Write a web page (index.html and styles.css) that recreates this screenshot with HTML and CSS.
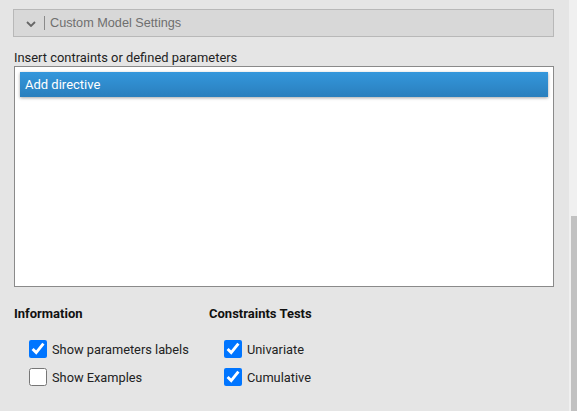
FILE: index.html
```html
<!DOCTYPE html>
<html>
<head>
<meta charset="utf-8">
<link rel="stylesheet" href="styles.css">
</head>
<body>
<div class="page">
  <div class="main">
    <div class="section-header">
      <svg class="chevron" width="10" height="6" viewBox="0 0 10 6"><path d="M1 1 L5 5 L9 1" fill="none" stroke="#666" stroke-width="1.8"/></svg>
      <span class="sep"></span>
      <span class="section-title">Custom Model Settings</span>
    </div>
    <div class="field-label">Insert contraints or defined parameters</div>
    <div class="list-box">
      <div class="list-item">Add directive</div>
    </div>
    <div class="options">
      <div class="col col-info">
        <div class="col-title">Information</div>
        <label class="check-row"><input type="checkbox" checked><span>Show parameters labels</span></label>
        <label class="check-row"><input type="checkbox"><span>Show Examples</span></label>
      </div>
      <div class="col">
        <div class="col-title">Constraints Tests</div>
        <label class="check-row"><input type="checkbox" checked><span>Univariate</span></label>
        <label class="check-row"><input type="checkbox" checked><span>Cumulative</span></label>
      </div>
    </div>
  </div>
  <div class="scrollbar"><div class="thumb"></div></div>
</div>
</body>
</html>
```
FILE: styles.css
```css
html, body {
  margin: 0;
  padding: 0;
}
body {
  background: #e5e5e5;
  font-family: Roboto, "Liberation Sans", sans-serif;
  font-size: 13px;
  color: #222;
}
.page {
  display: flex;
  height: 411px;
  overflow: hidden;
}
.main {
  flex: 1;
  padding: 9px 15px 0 13px;
}
.section-header {
  height: 26px;
  border: 1px solid #b8b8b8;
  background: #d8d8d8;
  display: flex;
  align-items: center;
}
.chevron {
  margin-left: 12px;
  margin-top: 2px;
}
.sep {
  width: 1px;
  height: 14px;
  background: #8a8a8a;
  margin-left: 8px;
}
.section-title {
  margin-left: 5px;
  font-family: "Liberation Sans", Arial, sans-serif;
  font-size: 12.7px;
  color: #6f6f6f;
}
.field-label {
  margin-top: 13px;
  margin-left: 1px;
  line-height: 15px;
  font-size: 12.9px;
  color: #222;
}
.list-box {
  margin-top: 1px;
  margin-left: 1px;
  height: 209px;
  border: 1px solid #8a8a8a;
  background: #fff;
  padding: 5px;
}
.list-item {
  height: 25px;
  line-height: 25px;
  padding-left: 5px;
  color: #fff;
  background: linear-gradient(#3497dc, #2a7fbd);
  box-shadow: 0 1px 3px rgba(0, 0, 0, 0.35);
}
.options {
  display: flex;
  margin-left: 1px;
  margin-top: 19px;
}
.col {
  display: flex;
  flex-direction: column;
}
.col-info {
  width: 195px;
}
.col-title {
  font-weight: bold;
  line-height: 15px;
  color: #111;
  margin-bottom: 19px;
}
.check-row {
  display: flex;
  align-items: center;
  height: 18px;
  margin-left: 15px;
  margin-bottom: 10px;
  font-size: 12.8px;
  color: #222;
}
.check-row input {
  width: 18px;
  height: 18px;
  margin: 0 5px 0 0;
  accent-color: #0075ff;
}
.scrollbar {
  width: 8px;
  background: #f0f0f0;
  display: flex;
  flex-direction: column;
}
.thumb {
  margin-top: 216px;
  margin-left: 2px;
  flex: 1;
  background: #c1c1c1;
}
```
